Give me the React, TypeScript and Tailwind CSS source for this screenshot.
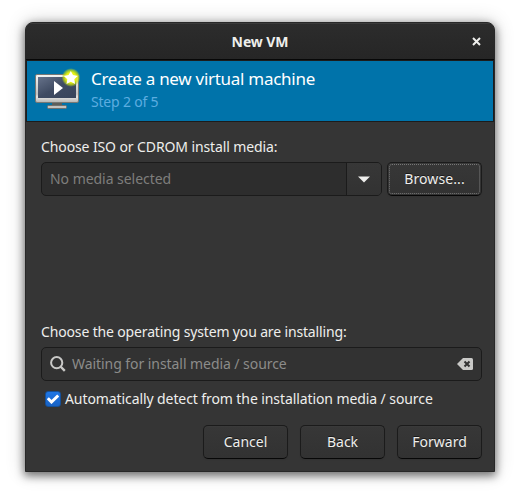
import React from "react";

function MonitorIcon() {
  return (
    <svg width="48" height="48" viewBox="0 0 48 48" className="block shrink-0">
      <defs>
        <linearGradient id="frame" x1="0" y1="0" x2="0" y2="1">
          <stop offset="0" stopColor="#f4f4f3" />
          <stop offset="0.7" stopColor="#c4c4c2" />
          <stop offset="0.8" stopColor="#e4e4e2" />
          <stop offset="1" stopColor="#b4b4b2" />
        </linearGradient>
        <linearGradient id="screen" x1="0" y1="0" x2="1" y2="1">
          <stop offset="0" stopColor="#66728a" />
          <stop offset="0.5" stopColor="#3f4b62" />
          <stop offset="1" stopColor="#38445a" />
        </linearGradient>
        <radialGradient id="glow">
          <stop offset="0" stopColor="#f6ff4a" />
          <stop offset="0.55" stopColor="#e4f010" />
          <stop offset="0.8" stopColor="#c3dc10" stopOpacity="0.65" />
          <stop offset="1" stopColor="#90c040" stopOpacity="0" />
        </radialGradient>
      </defs>
      <path d="M18 34h10v5H18z" fill="#5d5e5b" />
      <rect x="13.500" y="37.500" width="19" height="3" rx="1" fill="#c2c2c0" stroke="#70716e" />
      <rect x="1.500" y="6.500" width="43" height="28" rx="1.500" fill="url(#frame)" stroke="#777875" />
      <rect x="4" y="9" width="38" height="21" fill="url(#screen)" />
      <path d="M20 13v14l9-7z" fill="#fff" />
      <circle cx="37" cy="9.500" r="9.500" fill="url(#glow)" />
      <path d="M36.800 3l2.200 4.100 4.700.8-3.400 3.300.8 4.700-4.300-2.100-4.300 2.100.8-4.700-3.400-3.300 4.700-.8z" fill="#fff" />
    </svg>
  );
}

function Button({ children, className = "" }: { children: React.ReactNode; className?: string }) {
  return (
    <button
      className={`flex h-[34px] shrink-0 items-center justify-center rounded-[5px] border border-[#1b1b1b] border-b-[#070707] bg-linear-to-b from-[#373737] to-[#323232] text-[#eeeeec] [text-shadow:0_-1px_#0008] shadow-[inset_0_1px_#ffffff05,0_1px_2px_#00000012] ${className}`}
    >
      {children}
    </button>
  );
}

export default function App() {
  return (
    <main className="h-[500px] w-[520px] overflow-hidden bg-white px-[25px] pt-[22px] font-['Noto_Sans',sans-serif] text-[14px] leading-5 whitespace-nowrap text-[#eeeeec]">
      <section className="flex h-[450px] flex-col overflow-hidden rounded-t-[8px] border border-[#282828] bg-[#353535] shadow-[0_3px_9px_1px_#00000080,0_0_20px_#00000030]">
        <header className="relative flex h-[37px] shrink-0 items-center justify-center border-t border-b border-t-[#3b3b3b] border-b-[#070707] bg-linear-to-b from-[#2c2c2c] to-[#262626]">
          <h1 className="font-bold tracking-[-0.1px]">New VM</h1>
          <svg className="absolute top-[13px] right-[13px]" width="9" height="9" viewBox="0 0 9 9">
            <path d="M1 1l7 7M8 1L1 8" stroke="#eeeeec" strokeWidth="2" />
          </svg>
        </header>
        <div className="flex h-[62px] shrink-0 border border-[#1c1c1c] bg-[#0073aa] pt-[7px] pl-[7px]">
          <MonitorIcon />
          <div className="pl-[9px]">
            <h2 className="h-[23px] text-[17px] leading-[22px] text-white"><span className="tracking-[-0.28px]">Create a new virtual machine</span></h2>
            <p className="pt-px text-[#5cade0]"><span className="tracking-[-0.2px]">Step 2 of 5</span></p>
          </div>
        </div>
        <div className="flex grow flex-col px-[15px]">
          <label className="mt-[15px]"><span className="tracking-[-0.11px]">Choose ISO or CDROM install media:</span></label>
          <div className="mt-[5px] flex gap-[5px]">
            <div className="flex h-[34px] w-[341px] shrink-0 overflow-hidden rounded-[5px] border border-[#1b1b1b] bg-[#2d2d2d]">
              <div className="flex grow items-center pl-2 text-[#7e7e7c]"><span className="tracking-[-0.04px]">No media selected</span></div>
              <div className="flex w-[35px] items-center justify-center border-l border-[#1b1b1b] bg-linear-to-b from-[#373737] to-[#323232]">
                <svg width="12" height="7" viewBox="0 0 12 7"><path d="M0 .5h12L6 6.500z" fill="#eeeeec" /></svg>
              </div>
            </div>
            <Button className="w-[95px] p-px">
              <span className="flex h-[30px] w-full items-center justify-center rounded-[3px] border border-dotted border-[#777]"><span className="tracking-[0.1px]">Browse...</span></span>
            </Button>
          </div>
          <label className="mt-[126px]"><span className="tracking-[-0.15px]">Choose the operating system you are installing:</span></label>
          <div className="mt-[5px] flex h-[34px] w-[441px] items-center rounded-[5px] border border-[#1b1b1b] bg-[#323232] px-2 text-[#8c8c8a]">
            <svg className="mr-[6px]" width="16" height="16" viewBox="0 0 16 16" fill="none" stroke="#c9c9c7" strokeWidth="2">
              <circle cx="6.700" cy="6.700" r="5.600" /><path d="M10.500 10.500l4.300 4.300" strokeWidth="2.400" />
            </svg>
            <span className="tracking-[-0.06px]">Waiting for install media / source</span>
            <svg className="ml-auto" width="16" height="12" viewBox="0 0 16 12">
              <path d="M6 0h8.500Q16 0 16 1.500v9q0 1.500-1.500 1.500H6L0 6z" fill="#c9c9c7" />
              <path d="M7.500 3.500l5 5M12.500 3.500l-5 5" stroke="#323232" strokeWidth="2" />
            </svg>
          </div>
          <label className="mt-2 flex items-center pl-1">
            <span className="mr-1 flex size-4 items-center justify-center rounded-[3px] border border-[#155099] bg-linear-to-b from-[#1f76e4] to-[#1963c5]">
              <svg className="shrink-0" width="12" height="10" viewBox="0 0 12 10"><path d="M.8 4.300l3.700 3.700L11.200 1.500" fill="none" stroke="#fff" strokeWidth="3" /></svg>
            </span>
            <span className="tracking-[-0.09px]">Automatically detect from the installation media / source</span>
          </label>
          <footer className="mt-[16px] flex w-[441px] justify-end gap-3">
            <Button className="w-[85px]"><span>Cancel</span></Button>
            <Button className="w-[85px]"><span>Back</span></Button>
            <Button className="w-[85px]"><span>Forward</span></Button>
          </footer>
        </div>
      </section>
    </main>
  );
}
